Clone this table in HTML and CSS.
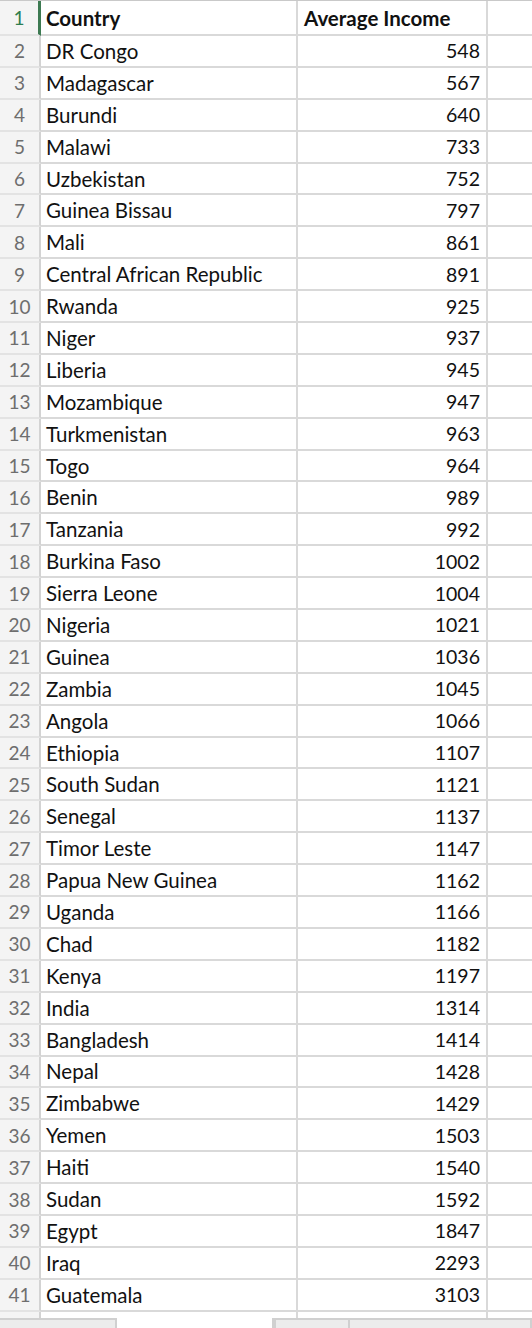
FILE: index.html
```html
<!DOCTYPE html>
<html>
<head>
<meta charset="utf-8">
<link rel="stylesheet" href="styles.css">
</head>
<body>
<div class="sheet">
  <div class="grid" id="grid">
    <div class="row first"><div class="rh sel">1</div><div class="c a b">Country</div><div class="c n b left">Average Income</div><div class="c e"></div></div>
    <div class="row"><div class="rh">2</div><div class="c a">DR Congo</div><div class="c n">548</div><div class="c e"></div></div>
    <div class="row"><div class="rh">3</div><div class="c a">Madagascar</div><div class="c n">567</div><div class="c e"></div></div>
    <div class="row"><div class="rh">4</div><div class="c a">Burundi</div><div class="c n">640</div><div class="c e"></div></div>
    <div class="row"><div class="rh">5</div><div class="c a">Malawi</div><div class="c n">733</div><div class="c e"></div></div>
    <div class="row"><div class="rh">6</div><div class="c a">Uzbekistan</div><div class="c n">752</div><div class="c e"></div></div>
    <div class="row"><div class="rh">7</div><div class="c a">Guinea Bissau</div><div class="c n">797</div><div class="c e"></div></div>
    <div class="row"><div class="rh">8</div><div class="c a">Mali</div><div class="c n">861</div><div class="c e"></div></div>
    <div class="row"><div class="rh">9</div><div class="c a">Central African Republic</div><div class="c n">891</div><div class="c e"></div></div>
    <div class="row"><div class="rh">10</div><div class="c a">Rwanda</div><div class="c n">925</div><div class="c e"></div></div>
    <div class="row"><div class="rh">11</div><div class="c a">Niger</div><div class="c n">937</div><div class="c e"></div></div>
    <div class="row"><div class="rh">12</div><div class="c a">Liberia</div><div class="c n">945</div><div class="c e"></div></div>
    <div class="row"><div class="rh">13</div><div class="c a">Mozambique</div><div class="c n">947</div><div class="c e"></div></div>
    <div class="row"><div class="rh">14</div><div class="c a">Turkmenistan</div><div class="c n">963</div><div class="c e"></div></div>
    <div class="row"><div class="rh">15</div><div class="c a">Togo</div><div class="c n">964</div><div class="c e"></div></div>
    <div class="row"><div class="rh">16</div><div class="c a">Benin</div><div class="c n">989</div><div class="c e"></div></div>
    <div class="row"><div class="rh">17</div><div class="c a">Tanzania</div><div class="c n">992</div><div class="c e"></div></div>
    <div class="row"><div class="rh">18</div><div class="c a">Burkina Faso</div><div class="c n">1002</div><div class="c e"></div></div>
    <div class="row"><div class="rh">19</div><div class="c a">Sierra Leone</div><div class="c n">1004</div><div class="c e"></div></div>
    <div class="row"><div class="rh">20</div><div class="c a">Nigeria</div><div class="c n">1021</div><div class="c e"></div></div>
    <div class="row"><div class="rh">21</div><div class="c a">Guinea</div><div class="c n">1036</div><div class="c e"></div></div>
    <div class="row"><div class="rh">22</div><div class="c a">Zambia</div><div class="c n">1045</div><div class="c e"></div></div>
    <div class="row"><div class="rh">23</div><div class="c a">Angola</div><div class="c n">1066</div><div class="c e"></div></div>
    <div class="row"><div class="rh">24</div><div class="c a">Ethiopia</div><div class="c n">1107</div><div class="c e"></div></div>
    <div class="row"><div class="rh">25</div><div class="c a">South Sudan</div><div class="c n">1121</div><div class="c e"></div></div>
    <div class="row"><div class="rh">26</div><div class="c a">Senegal</div><div class="c n">1137</div><div class="c e"></div></div>
    <div class="row"><div class="rh">27</div><div class="c a">Timor Leste</div><div class="c n">1147</div><div class="c e"></div></div>
    <div class="row"><div class="rh">28</div><div class="c a">Papua New Guinea</div><div class="c n">1162</div><div class="c e"></div></div>
    <div class="row"><div class="rh">29</div><div class="c a">Uganda</div><div class="c n">1166</div><div class="c e"></div></div>
    <div class="row"><div class="rh">30</div><div class="c a">Chad</div><div class="c n">1182</div><div class="c e"></div></div>
    <div class="row"><div class="rh">31</div><div class="c a">Kenya</div><div class="c n">1197</div><div class="c e"></div></div>
    <div class="row"><div class="rh">32</div><div class="c a">India</div><div class="c n">1314</div><div class="c e"></div></div>
    <div class="row"><div class="rh">33</div><div class="c a">Bangladesh</div><div class="c n">1414</div><div class="c e"></div></div>
    <div class="row"><div class="rh">34</div><div class="c a">Nepal</div><div class="c n">1428</div><div class="c e"></div></div>
    <div class="row"><div class="rh">35</div><div class="c a">Zimbabwe</div><div class="c n">1429</div><div class="c e"></div></div>
    <div class="row"><div class="rh">36</div><div class="c a">Yemen</div><div class="c n">1503</div><div class="c e"></div></div>
    <div class="row"><div class="rh">37</div><div class="c a">Haiti</div><div class="c n">1540</div><div class="c e"></div></div>
    <div class="row"><div class="rh">38</div><div class="c a">Sudan</div><div class="c n">1592</div><div class="c e"></div></div>
    <div class="row"><div class="rh">39</div><div class="c a">Egypt</div><div class="c n">1847</div><div class="c e"></div></div>
    <div class="row"><div class="rh">40</div><div class="c a">Iraq</div><div class="c n">2293</div><div class="c e"></div></div>
    <div class="row"><div class="rh">41</div><div class="c a">Guatemala</div><div class="c n">3103</div><div class="c e"></div></div>
    <div class="row tail"><div class="rh"></div><div class="c a"></div><div class="c n"></div><div class="c e"></div></div>
  </div>
  <div class="tabs">
    <div class="tab t1"></div>
    <div class="tab active"></div>
    <div class="tab t3"></div>
    <div class="tab t4"></div>
  </div>
</div>
</body>
</html>
```

FILE: styles.css
```css
* { box-sizing: border-box; }
html, body {
  margin: 0;
  padding: 0;
  background: #ffffff;
}
body {
  width: 532px;
  height: 1328px;
  overflow: hidden;
  font-family: Lato, "Open Sans", sans-serif;
}
.sheet {
  display: flex;
  flex-direction: column;
  height: 1328px;
}
.grid {
  border-top: 1px solid #c9c9c9;
}
.row {
  display: grid;
  grid-template-columns: 41px 257px 190px 1fr;
  height: 31.9px;
}
.row.first {
  height: 35px;
}
.row.tail {
  height: 6px;
}
.row.tail .c, .row.tail .rh {
  border-bottom: none;
}
.rh {
  background: #f4f4f4;
  color: #6e6e6e;
  font-size: 19px;
  display: flex;
  align-items: center;
  justify-content: center;
  border-right: 2px solid #d3d3d3;
  border-bottom: 2px solid #e3e3e3;
  padding-left: 0;
}
.rh.sel {
  color: #2e7d4f;
  border-right: 3px solid #3d7a52;
}
.c {
  display: flex;
  align-items: center;
  font-size: 20.5px;
  color: #111111;
  border-right: 2px solid #d9d9d9;
  border-bottom: 2px solid #d9d9d9;
  white-space: nowrap;
  overflow: hidden;
}
.a {
  padding-left: 5px;
}
.n {
  justify-content: flex-end;
  padding-right: 6px;
  font-size: 19.5px;
}
.n.left {
  justify-content: flex-start;
  padding-left: 6px;
  font-size: 20.5px;
}
.b {
  font-weight: 700;
}
.e {
  border-right: none;
}
.tabs {
  margin-top: auto;
  height: 10px;
  display: grid;
  grid-template-columns: 117px 157px 76px 1fr;
}
.tab {
  background: #ececec;
  border-top: 2px solid #d0d0d0;
  border-right: 2px solid #d0d0d0;
}
.tab.active {
  background: #ffffff;
  border-top: none;
}
.tab.t3 {
  border-left: 2px solid #d0d0d0;
}
```
